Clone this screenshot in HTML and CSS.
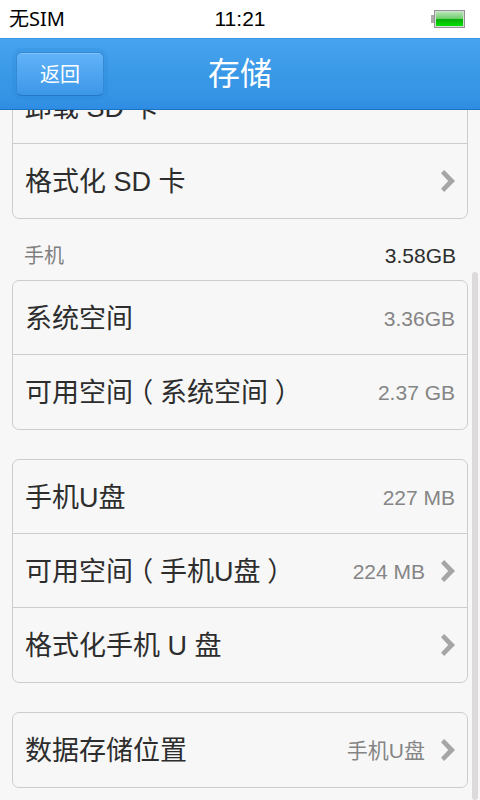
FILE: index.html
```html
<!DOCTYPE html>
<html lang="zh-CN">
<head>
<meta charset="utf-8">
<meta name="viewport" content="width=device-width, initial-scale=1">
<title>存储</title>
<link rel="stylesheet" href="styles.css">
</head>
<body>
<svg class="symbols" aria-hidden="true">
  <symbol id="chevron" viewBox="0 0 15 24"><path d="M1 4.2 4.2 1 15 12 4.2 23 1 19.8 8.2 12Z" fill="#a6a6a6"/></symbol>
</svg>
<div class="status">
  <span class="carrier">无SIM</span>
  <span class="clock">11:21</span>
  <svg class="battery" viewBox="0 0 34 18" role="img" aria-label="电量">
    <defs>
      <linearGradient id="charge" x1="0" y1="0" x2="0" y2="1">
        <stop offset="0" stop-color="#b4e6b4"/>
        <stop offset="0.5" stop-color="#6bcb68"/>
        <stop offset="0.52" stop-color="#08ad08"/>
        <stop offset="1" stop-color="#00df00"/>
      </linearGradient>
    </defs>
    <rect x="0" y="5" width="4" height="8" fill="#aaa"/>
    <rect x="3" y="0" width="31" height="18" fill="#929292"/>
    <rect x="4" y="1" width="29" height="16" fill="#d2dfd2"/>
    <rect x="5" y="2" width="27" height="14" fill="url(#charge)"/>
  </svg>
</div>
<header class="bar">
  <button class="back" type="button">返回</button>
  <h1 class="title">存储</h1>
</header>
<main class="content">
  <section class="card">
    <a class="row" href="#unmount"><span class="label">卸载 SD 卡</span></a>
    <a class="row" href="#format-sd"><span class="label">格式化 SD 卡</span><svg class="chevron" aria-hidden="true"><use href="#chevron"/></svg></a>
  </section>
  <div class="heading"><h2 class="heading-name">手机</h2><span class="total">3.58GB</span></div>
  <section class="card">
    <div class="row"><span class="label">系统空间</span><span class="value">3.36GB</span></div>
    <div class="row"><span class="label">可用空间<span class="paren">（</span>系统空间<span class="paren">）</span></span><span class="value">2.37 GB</span></div>
  </section>
  <section class="card spaced">
    <div class="row"><span class="label">手机U盘</span><span class="value">227 MB</span></div>
    <a class="row" href="#available"><span class="label">可用空间<span class="paren">（</span>手机U盘<span class="paren">）</span></span><span class="value">224 MB</span><svg class="chevron" aria-hidden="true"><use href="#chevron"/></svg></a>
    <a class="row" href="#format-phone"><span class="label">格式化手机 U 盘</span><svg class="chevron" aria-hidden="true"><use href="#chevron"/></svg></a>
  </section>
  <section class="card spaced">
    <a class="row" href="#location"><span class="label">数据存储位置</span><span class="value">手机U盘</span><svg class="chevron" aria-hidden="true"><use href="#chevron"/></svg></a>
  </section>
  <div class="scrollbar"></div>
</main>
</body>
</html>
```

FILE: styles.css
```css
* { box-sizing: border-box; }

body {
  margin: 0;
  height: 100vh;
  display: flex;
  flex-direction: column;
  background: #f7f7f7;
  color: #2d2d2d;
  font-family: "Liberation Sans", "Noto Sans CJK SC", sans-serif;
}

.symbols { position: absolute; width: 0; height: 0; }

.status {
  flex: none;
  height: 38px;
  display: grid;
  grid-template-columns: 1fr auto 1fr;
  align-items: center;
  background: #fff;
  color: #000;
}

.carrier { padding-left: 9px; font: 20px/38px "Noto Sans", "Noto Sans CJK SC", sans-serif; }
.clock { font-size: 21px; line-height: 38px; }
.battery { width: 34px; height: 18px; margin-right: 15px; justify-self: end; }

.bar {
  flex: none;
  height: 72px;
  padding: 0 12px;
  display: grid;
  grid-template-columns: 1fr auto 1fr;
  align-items: center;
  border-top: 1px solid #3a97e6;
  border-bottom: 1px solid #1b73bd;
  background: linear-gradient(#46a3ef, #3998e6 55%, #3493e4 85%, #2f8ce4);
  color: #fff;
}

.back {
  justify-self: start;
  width: 88px;
  height: 44px;
  margin-left: 4px;
  padding: 0;
  border: 1px solid #3489d6;
  border-bottom-color: #2479c4;
  border-radius: 6px;
  background: linear-gradient(#62b3f9, #3c97e8);
  box-shadow: 0 0 0 4px rgba(35, 125, 210, 0.18), inset 0 1px 0 #80c2fa;
  color: #fff;
  font: 20px/40px "Noto Sans CJK SC", sans-serif;
}

.title {
  margin: 0;
  font-size: 32px;
  font-weight: 400;
  line-height: 68px;
}

.content {
  position: relative;
  flex: 1;
  min-height: 0;
  overflow: hidden;
  padding: 0 12px 12px;
  display: flex;
  flex-direction: column;
  justify-content: flex-end;
}

.card {
  flex: none;
  border: 1px solid #cbcdcd;
  border-radius: 7px;
}

.spaced { margin-top: 29px; }

.row {
  height: 74px;
  padding: 0 12px;
  display: flex;
  align-items: center;
  gap: 15px;
  border-bottom: 1px solid #cbcdcd;
  color: inherit;
  text-decoration: none;
  white-space: nowrap;
}

.row:last-child { border-bottom: 0; }

.label { flex: 1; padding-top: 2px; font-size: 27px; line-height: 40px; }
.value { padding-top: 2px; color: #858585; font-size: 21px; line-height: 32px; }
.chevron { flex: none; width: 15px; height: 24px; }

/* Full-width brackets, centred in their cell */
.paren {
  display: inline-block;
  width: 27px;
  text-align: center;
  font-feature-settings: "halt";
}

.heading {
  flex: none;
  height: 61px;
  padding: 12px 12px 0;
  display: flex;
  align-items: center;
  justify-content: space-between;
}

.heading-name {
  margin: 0;
  color: #808080;
  font-size: 20px;
  font-weight: 400;
  line-height: 32px;
}

.total { font-size: 21px; line-height: 32px; }

.scrollbar {
  position: absolute;
  top: 162px;
  right: 2px;
  bottom: 0;
  width: 6px;
  border-radius: 3px;
  background: #dcdada;
}
```
